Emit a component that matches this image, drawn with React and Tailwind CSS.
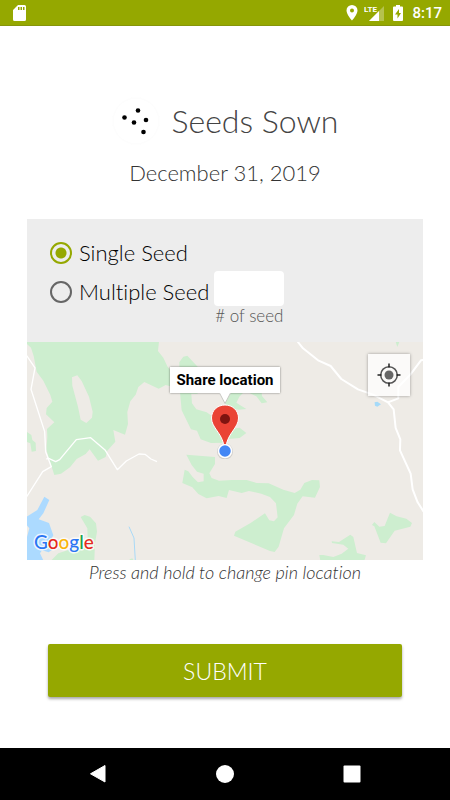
import { useState } from "react";

function StatusBar() {
  return (
    <header className="flex h-[26px] items-center justify-between border-b border-[#86950a] bg-[#95a800] pr-2 pl-3 text-white">
      <svg className="h-4 w-4" viewBox="0 0 16 16" aria-label="SD card">
        <path
          fill="#fff"
          fillRule="evenodd"
          d="M6 0h6.500q1.500 0 1.500 1.500v13q0 1.500-1.500 1.500h-10Q1 16 1 14.500V5zM6 2v3h1.500V2zm2.500 0v3H10V2zM11 2v3h1.500V2z"
        />
      </svg>
      <div className="flex items-center">
        <svg className="mr-1.5 h-4 w-3" viewBox="0 0 12 16" aria-label="Location">
          <path
            fill="#fff"
            fillRule="evenodd"
            d="M6 0a5.500 5.500 0 0 0-5.500 5.500C.5 9.500 6 15.500 6 15.500s5.500-6 5.500-10A5.500 5.500 0 0 0 6 0zm0 3.500a2 2 0 1 1 0 4 2 2 0 0 1 0-4z"
          />
        </svg>
        <svg className="mr-2 h-4 w-5" viewBox="0 0 20 16" aria-label="LTE signal">
          <path fill="#fff" fillOpacity=".3" d="M20 1v15H5z" />
          <path fill="#fff" d="M15 6v10H5z" />
          <path fill="#95a800" d="M0 0h13v8H0z" />
          <text x="0" y="7" fill="#fff" fontFamily="Roboto, sans-serif" fontSize="8" fontWeight="700">
            LTE
          </text>
        </svg>
        <svg className="mr-2 h-4 w-3" viewBox="0 0 12 16" aria-label="Battery charging">
          <path
            fill="#fff"
            fillRule="evenodd"
            d="M4 0h4v1.500h2q1 0 1 1V15q0 1-1 1H2q-1 0-1-1V2.500q0-1 1-1h2zM7 4 3 9.500h2.500V13.500L9 8H7z"
          />
        </svg>
        <span className="font-[Roboto,sans-serif] text-[15px] leading-6 font-medium">8:17</span>
      </div>
    </header>
  );
}

function SeedsIcon() {
  return (
    <svg className="h-12 w-12" viewBox="0 0 48 48" aria-hidden="true">
      <circle cx="24" cy="24" r="23" fill="none" stroke="#fdfdfd" />
      <circle cx="12.500" cy="20.500" r="2.300" />
      <circle cx="26" cy="13.500" r="2.300" />
      <circle cx="22" cy="25.500" r="2.300" />
      <circle cx="34" cy="23" r="2.300" />
      <circle cx="31.500" cy="35" r="2.300" />
    </svg>
  );
}

function Terrain() {
  return (
    <svg
      className="block h-full w-full"
      viewBox="0 0 396 218"
      preserveAspectRatio="xMidYMid slice"
      aria-hidden="true"
    >
      <path fill="#eeebe6" d="M-400-100h1200v500H-400z" />
      <g transform="translate(-7 -7) scale(.3333)">
        <g fill="#cdeecf">
          <path d="M20 20H417L414 48 430 68 442 94 462 120V157L437 150 416 161 373 141 355 156 347 179 331 199 322 231 324 267 315 299 280 285 286 320 262 347 257 366 234 377 209 343 197 357 170 372 150 397 123 416 103 420 90 380 79 344 82 306 81 282 103 262 78 238 80 219 97 200 91 180 70 137 50 110 41 63 33 38 20 26Z" />
          <path d="M21 291 34 300 37 315 47 323 48 348 35 350 31 325 21 321Z" />
          <path d="M478 82 490 65 502 62 533 95V176H514L516 205 529 223 560 232 580 246 620 300 617 323 573 324 542 313 531 287 513 283 485 226 480 170Z" />
          <path d="M499 359 585 366V387L568 415 575 429 597 437 635 435 680 435 710 444 746 445 790 464 824 474 841 464 853 444 876 435 898 436 900 456 885 488 848 484 832 506 822 540 792 580 776 635 764 651 750 648 642 602 646 590 693 563 735 535 748 556 762 559 773 547 768 505 750 486 724 476 687 468 665 474 627 465 620 489 596 483 560 490 535 477 517 457 487 444 494 404 505 409 518 426 534 442 551 439V416L531 410 515 390Z" />
          <path d="M182 546 194 540 210 545 228 565 231 590 225 625 223 676H94L115 655 145 645 190 630 203 610 202 580Z" />
          <path d="m329 673 8-3 4 6h-12z" />
        </g>
        <path fill="#eeebe6" d="M156 127 172 121 185 138 207 185 218 230 216 248 199 264 182 254 174 215 157 152Z" />
        <path fill="#acdaff" d="M20 545 52 525 73 485 88 495 70 535 56 553 87 564 100 601 90 620 100 642 86 652 66 646 60 655 70 676H20V610L28 580 20 570Z" />
        <path fill="none" stroke="#a9d9f7" strokeWidth="3" d="m327 575 15 34 4 67" />
        <g fill="none" stroke="#fff" strokeWidth="4" strokeLinejoin="round">
          <path d="M20 62 45 99 33 163 74 290 77 350 94 395 68 410 20 485" />
          <path d="m79 372 7-2 21 10 12-6 50-60 43-6 44 38 36 58 27-26 38-21 18 1 18 14 18 8" />
        </g>
      </g>
      <g transform="translate(193 -7) scale(.3333)">
        <g fill="#cdeecf">
          <path d="M20 172H71L58 185 49 203 79 222 56 224 28 220 15 205Z" />
          <path d="M84 172H125L126 183 142 202 125 205 109 184Z" />
          <path d="m35 281 24-3 20 16-20 15-35 3Z" />
          <path d="m527 20 11 1-6 15Z" />
          <path d="m456 570 7-9 15 14 16-2 16-40 20 11 29 7 17 13-5 11-47 12-26 38-16-2-19-49Z" />
          <path d="m335 619 22 2 34-22 9 7 11 48 27 7-5 16H301l-3-17 12 0 30 6 25-10 20-15-15-12-34-5Z" />
        </g>
        <path fill="#a5daf9" d="m464 202 8-2 11 8-11 7-7-3Z" />
        <g fill="none" stroke="#fff" strokeWidth="6" strokeLinejoin="round">
          <path d="m233 20 16 20 47 37 36 16 32 39 50 31 45 16 45 23 17 21 6 56 14 34-1 33 32 70 6 47 15 39 18 28" />
          <path d="m504 202 31-12V156l36-37 32-43 12-2" />
        </g>
      </g>
    </svg>
  );
}

function GoogleMark() {
  return (
    <svg className="absolute bottom-1 left-1 h-7 w-[72px]" viewBox="0 0 72 28" aria-label="Google">
      <text
        x="3"
        y="21"
        fontFamily="Lato, sans-serif"
        fontSize="19"
        fontWeight="500"
        stroke="#fff"
        strokeWidth="3"
        strokeOpacity=".8"
        strokeLinejoin="round"
        paintOrder="stroke"
      >
        <tspan fill="#2a75f3">G</tspan>
        <tspan fill="#e52a20">o</tspan>
        <tspan fill="#f9b50b">o</tspan>
        <tspan fill="#2a75f3">g</tspan>
        <tspan fill="#19a24a">l</tspan>
        <tspan fill="#e52a20">e</tspan>
      </text>
    </svg>
  );
}

function LocationMap() {
  return (
    <div className="relative h-[218px] overflow-hidden">
      <Terrain />
      <GoogleMark />
      <div className="absolute top-[25px] left-1/2 flex -translate-x-1/2 flex-col items-center">
        <div className="flex h-[26px] w-[110px] items-center justify-center bg-white font-[Roboto,sans-serif] text-[15px] leading-5 font-bold whitespace-nowrap text-black shadow-[0_0_2px_rgba(0,0,0,0.5)]">
          Share location
        </div>
        <svg className="h-[66px] w-8" viewBox="0 0 32 66" aria-label="Pin">
          <path fill="#fff" stroke="#c8c8c4" d="m10.500 0 5.500 10.500L21.500 0" />
          <circle cx="16" cy="58.500" r="8" fill="#000" fillOpacity=".12" />
          <circle cx="16" cy="58" r="6.500" fill="#4387f5" stroke="#fff" strokeWidth="1.500" />
          <path
            fill="#ea4335"
            stroke="#fff"
            d="M16 12C8.500 12 2.500 17.500 2.500 25c0 9 9 14 12 25.500.5 1.600 2.500 1.600 3 0C20.500 39 29.500 34 29.500 25c0-7.500-6-13-13.500-13z"
          />
          <circle cx="16" cy="26" r="5" fill="#7e1410" />
        </svg>
      </div>
      <button
        type="button"
        aria-label="My location"
        className="absolute top-3 right-[13px] flex h-[42px] w-[42px] items-center justify-center bg-white/75 shadow-[0_0_3px_rgba(0,0,0,0.35)]"
      >
        <svg className="h-6 w-6" viewBox="0 0 24 24" fill="none" stroke="#555" strokeWidth="1.500">
          <circle cx="12" cy="12" r="8.300" />
          <circle cx="12" cy="12" r="4.500" fill="#666" stroke="none" />
          <path stroke="#222" d="M12 .5v4M12 19.500v4M.5 12h4M19.500 12h4" />
        </svg>
      </button>
    </div>
  );
}

const radioClass =
  "h-[22px] w-[22px] shrink-0 appearance-none rounded-full border-2 border-[#666] checked:border-[#95a800] checked:bg-[radial-gradient(circle,#95a800_5px,transparent_6px)]";

export default function App() {
  const [mode, setMode] = useState("single");
  const [count, setCount] = useState("");

  return (
    <div className="flex min-h-screen flex-col bg-white font-[Lato,sans-serif] font-light text-black [font-variant-ligatures:none]">
      <StatusBar />
      <main className="flex flex-1 flex-col px-[27px] pt-[71px]">
        <div className="flex items-center justify-center gap-3">
          <SeedsIcon />
          <h1 className="text-[32px] leading-[46px] font-light text-[#444]">Seeds Sown</h1>
        </div>
        <p className="mt-3 text-center text-[22px] leading-8 text-[#333]">December 31, 2019</p>

        <form
          className="mt-[30px] flex flex-1 flex-col"
          onSubmit={(event) => event.preventDefault()}
        >
          <div className="h-[123px] bg-[#ededed] pt-5 pl-[23px]">
            <label className="flex h-7 items-center gap-[7px] text-[22px] leading-7">
              <input
                type="radio"
                name="mode"
                className={radioClass}
                checked={mode === "single"}
                onChange={() => setMode("single")}
              />
              Single Seed
            </label>
            <div className="mt-1 flex">
              <label className="flex h-[42px] items-center gap-[7px] text-[22px] leading-7">
                <input
                  type="radio"
                  name="mode"
                  className={radioClass}
                  checked={mode === "multiple"}
                  onChange={() => setMode("multiple")}
                />
                Multiple Seed
              </label>
              <div className="ml-[5px] flex w-[70px] flex-col items-center">
                <input
                  id="count"
                  type="text"
                  inputMode="numeric"
                  className="h-[35px] w-full rounded bg-white px-2 text-center text-lg"
                  value={count}
                  onChange={(event) => setCount(event.target.value)}
                />
                <label htmlFor="count" className="text-[17px] leading-5 whitespace-nowrap text-[#555]">
                  # of seed
                </label>
              </div>
            </div>
          </div>
          <LocationMap />
          <p className="text-center text-lg leading-6 text-[#333] italic">
            Press and hold to change pin location
          </p>
          <div className="mt-[60px] px-[21px]">
            <button
              type="submit"
              className="block h-[53px] w-full rounded-xs bg-[#95a800] text-[23px] leading-7 text-white shadow-[0_2px_3px_rgba(0,0,0,0.35)]"
            >
              SUBMIT
            </button>
          </div>
        </form>
      </main>
      <nav className="grid h-[52px] grid-cols-3 items-center bg-black px-[35px]">
        <button type="button" aria-label="Back" className="justify-self-center">
          <svg className="h-5 w-5" viewBox="0 0 20 20">
            <path fill="#fff" stroke="#fff" strokeLinejoin="round" d="M17 1.500v16.500L2.500 9.800z" />
          </svg>
        </button>
        <button type="button" aria-label="Home" className="justify-self-center">
          <svg className="h-5 w-5" viewBox="0 0 20 20">
            <circle cx="10" cy="10" r="9" fill="#fff" />
          </svg>
        </button>
        <button type="button" aria-label="Recent apps" className="justify-self-center">
          <svg className="h-5 w-5" viewBox="0 0 20 20">
            <rect x="1.500" y="1.500" width="17" height="17" rx="1" fill="#fff" />
          </svg>
        </button>
      </nav>
    </div>
  );
}
